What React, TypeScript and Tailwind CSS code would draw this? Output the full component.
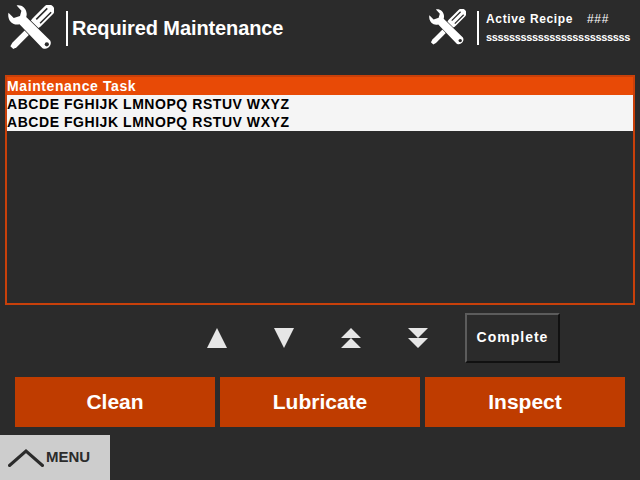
const arial = "font-['Liberation_Sans',Arial,sans-serif]";

function ToolsIcon({ className }: { className: string }) {
  return (
    <svg viewBox="0 0 48 48" className={className}>
      {/* screwdriver */}
      <path d="M42.500 5.500L29.500 18.500" stroke="#fff" strokeWidth="12" strokeLinecap="round" />
      <path d="M41 3.500L29.500 15M45 7.500L33.500 19" stroke="#2b2b2b" strokeWidth="1.600" />
      <path d="M26 18l4.500 4.500L9 44l-3.500 2-3-3 2-3.500z" fill="#fff" />
      {/* wrench */}
      <path
        d="M9 .5C14-.5 19 3 19.500 9c.1 1.500-.2 2.500-.5 3.500L44 37a6 6 0 0 1-8 8L12 20c-2 .5-4 .5-6-.2C1.500 18-.5 13 .5 8L6 13.500l6.500-2L14 6z"
        fill="#fff"
        stroke="#2b2b2b"
        strokeWidth="1.500"
        paintOrder="stroke"
      />
      <circle cx="40.500" cy="41" r="2.200" fill="#2b2b2b" />
    </svg>
  );
}

function Tri({ down }: { down?: boolean }) {
  return (
    <svg viewBox="0 0 22 22" className="h-[22px] w-[22px]">
      <path d={down ? "M1 1h20L11 21z" : "M11 1l10 20H1z"} fill="#e6e6e6" />
    </svg>
  );
}

function DoubleTri({ down }: { down?: boolean }) {
  return (
    <svg viewBox="0 0 22 22" className="h-[22px] w-[22px]">
      <path
        d={down ? "M1 1h20L11 11zM1 11h20L11 21z" : "M11 1l10 10H1zM11 11l10 10H1z"}
        fill="#e6e6e6"
      />
    </svg>
  );
}

export default function App() {
  return (
    <div className={`flex h-[480px] w-[640px] flex-col overflow-hidden bg-[#2b2b2b] ${arial}`}>
      <header className="flex h-[75px] shrink-0 items-start">
        <div className="flex w-[420px] shrink-0 items-center pl-2 pt-[5px]">
          <ToolsIcon className="h-[46px] w-[46px]" />
          <div className="ml-[12px] h-[35px] w-[2px] bg-white" />
          <h1 className="ml-[4px] text-[20px] font-bold tracking-[-0.1px] text-white">Required Maintenance</h1>
        </div>
        <div className="ml-[9px] flex items-center pt-[9px]">
          <ToolsIcon className="h-[37px] w-[37px] shrink-0" />
          <div className="ml-[11px] h-[34px] w-[2px] bg-white" />
          <div className="ml-[7px] text-white">
            <div className="flex h-[18px] items-center text-[12px] font-bold tracking-[0.65px]">
              <span className="w-[101px]">Active Recipe</span>
              <span className="font-normal">###</span>
            </div>
            <div className="h-[18px] text-[11px] font-bold leading-[18px] tracking-[-0.36px]">sssssssssssssssssssssssss</div>
          </div>
        </div>
      </header>

      <section className="mx-[5px] h-[230px] shrink-0 border-2 border-[#c8400a]">
        <div className="h-[18px] bg-[#e84a06] text-[14px] font-bold leading-[18px] tracking-[0.6px] text-white">
          Maintenance Task
        </div>
        {[0, 1].map((i) => (
          <div key={i} className="h-[18px] bg-[#f5f5f5] text-[14px] font-bold leading-[18px] tracking-[0.55px] text-black">
            ABCDE FGHIJK LMNOPQ RSTUV WXYZ
          </div>
        ))}
      </section>

      <div className="mt-[8px] flex h-[50px] shrink-0 items-center">
        <div className="ml-[206px] flex w-[259px] items-center">
          <div className="w-[67px]"><Tri /></div>
          <div className="w-[67px]"><Tri down /></div>
          <div className="w-[67px]"><DoubleTri /></div>
          <div className="w-[58px]"><DoubleTri down /></div>
        </div>
        <button
          type="button"
          className="h-[50px] w-[95px] border-2 border-t-[#5c5c5c] border-l-[#5c5c5c] border-r-[#111] border-b-[#111] bg-[#2b2b2b] pb-[2px] text-[14px] font-bold tracking-[1px] text-white"
        >
          Complete
        </button>
      </div>

      <div className="mt-[14px] flex h-[50px] shrink-0 gap-[5px] pl-[15px]">
        {["Clean", "Lubricate", "Inspect"].map((label) => (
          <button
            key={label}
            type="button"
            className="h-[50px] w-[200px] bg-[#bf3c00] text-[21px] font-bold text-white"
          >
            {label}
          </button>
        ))}
      </div>

      <div className="mt-2 flex h-[45px] w-[110px] shrink-0 items-center bg-[#cdcdcd] pl-[8px]">
        <svg viewBox="0 0 36 18" className="h-[18px] w-[36px]">
          <path d="M1.500 16.500L18 2l16.500 14.500" fill="none" stroke="#2b2b2b" strokeWidth="3" strokeLinecap="round" strokeLinejoin="miter" />
        </svg>
        <span className="ml-[2px] text-[15px] font-bold text-[#2b2b2b]">MENU</span>
      </div>
    </div>
  );
}
